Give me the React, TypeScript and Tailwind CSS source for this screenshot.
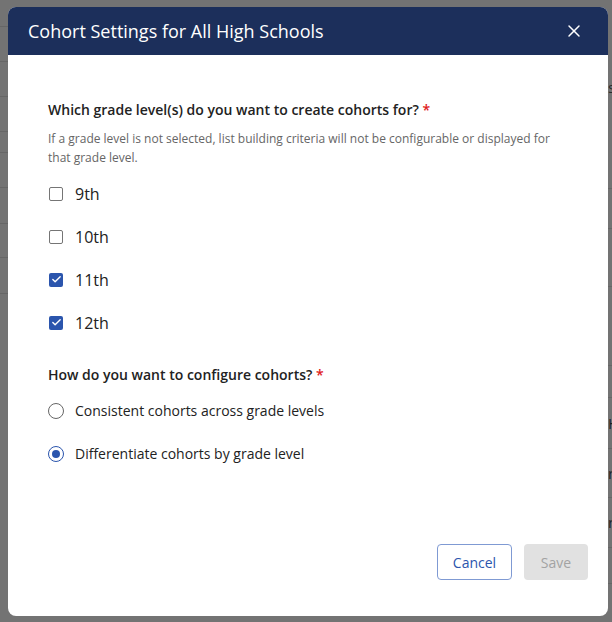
import { X, Check } from "lucide-react";

const leftRows = [27, 35, 35, 35, 21, 35, 36, 34, 36];
const rightRows = [
  { h: 189, t: "" },
  { h: 40, t: "" },
  { h: 58, t: "" },
  { h: 79, t: "" },
  { h: 32, t: "" },
  { h: 51, t: "H" },
  { h: 49, t: "r" },
  { h: 50, t: "r" },
  { h: 36, t: "" },
];

const grades = [
  { label: "9th", checked: false },
  { label: "10th", checked: false },
  { label: "11th", checked: true },
  { label: "12th", checked: true },
];

const modes = [
  { label: "Consistent cohorts across grade levels", selected: false },
  { label: "Differentiate cohorts by grade level", selected: true },
];

function Backdrop() {
  return (
    <div className="flex h-full w-full justify-between bg-[#737373]">
      <div className="flex w-[8px] flex-col">
        {leftRows.map((h, i) => (
          <div key={i} style={{ height: h }} className="border-b border-[#666666]" />
        ))}
      </div>
      <div className="relative w-[4px]">
        <div className="absolute left-0 top-[80px] text-[15px] leading-none text-[#2a2a2a]">s</div>
        <div className="flex flex-col">
          {rightRows.map((r, i) => (
            <div
              key={i}
              style={{ height: r.h }}
              className="flex items-center border-b border-[#666666] text-[15px] leading-none text-[#1f1f1f]"
            >
              {r.t}
            </div>
          ))}
        </div>
      </div>
    </div>
  );
}

function Checkbox({ checked }: { checked: boolean }) {
  if (checked) {
    return (
      <span className="flex h-[14px] w-[14px] items-center justify-center rounded-[2px] bg-[#2b55ad]">
        <Check size={11} strokeWidth={3} className="text-white" />
      </span>
    );
  }
  return <span className="h-[14px] w-[14px] rounded-[2px] border-[1.5px] border-[#757575] bg-white" />;
}

function Radio({ selected }: { selected: boolean }) {
  return (
    <span
      className={`flex h-[16px] w-[16px] items-center justify-center rounded-full border-[1.5px] bg-white ${
        selected ? "border-[#2b55ad]" : "border-[#666666]"
      }`}
    >
      {selected && <span className="h-[8px] w-[8px] rounded-full bg-[#2b55ad]" />}
    </span>
  );
}

export default function App() {
  return (
    <div
      className="relative h-[622px] w-[612px] overflow-hidden"
      style={{ fontFamily: '"Open Sans", "Noto Sans", sans-serif' }}
    >
      <Backdrop />

      <div className="absolute left-[8px] top-[7px] flex h-[609px] w-[600px] flex-col overflow-hidden rounded-[8px] bg-white">
        <div className="flex h-[48px] shrink-0 items-center justify-between bg-[#1c2f5b] pl-[20px] pr-[24px]">
          <h2 className="text-[18px] font-normal text-white">Cohort Settings for All High Schools</h2>
          <X size={20} strokeWidth={1.75} className="text-white" />
        </div>

        <div className="flex flex-1 flex-col px-[40px] pt-[45px]">
          <p className="text-[14px] font-semibold leading-[20px] text-[#222222]">
            Which grade level(s) do you want to create cohorts for?{" "}
            <span className="text-[#e0201b]">*</span>
          </p>
          <p className="mt-[9px] text-[12px] leading-[19px] text-[#666666]">
            If a grade level is not selected, list building criteria will not be configurable or displayed for
            that grade level.
          </p>

          <div className="mt-[5px] flex flex-col">
            {grades.map((g) => (
              <label key={g.label} className="flex h-[43px] items-center gap-[12px] pl-[1px]">
                <Checkbox checked={g.checked} />
                <span className="text-[16px] text-[#222222]">{g.label}</span>
              </label>
            ))}
          </div>

          <p className="mt-[21px] text-[14px] font-semibold leading-[20px] text-[#222222]">
            How do you want to configure cohorts? <span className="text-[#e0201b]">*</span>
          </p>

          <div className="mt-[4px] flex flex-col">
            {modes.map((m) => (
              <label key={m.label} className="flex h-[43px] items-center gap-[11px]">
                <Radio selected={m.selected} />
                <span className="text-[14px] text-[#222222]">{m.label}</span>
              </label>
            ))}
          </div>

          <div className="mt-auto flex justify-end gap-[12px] pb-[36px]">
            <button className="h-[36px] w-[75px] rounded-[4px] border border-[#7f9ad3] bg-white text-[14px] text-[#2b55ad]">
              Cancel
            </button>
            <button className="-mr-[20px] h-[36px] w-[64px] rounded-[4px] bg-[#e1e1e1] text-[14px] text-[#a3a3a3]">
              Save
            </button>
          </div>
        </div>
      </div>
    </div>
  );
}
